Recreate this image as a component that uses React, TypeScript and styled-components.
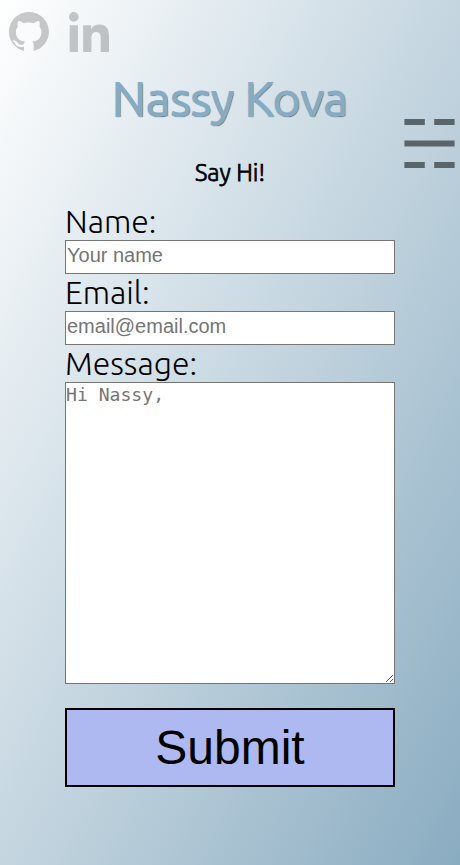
import React from "react";
import styled, { createGlobalStyle } from "styled-components";

const GlobalStyle = createGlobalStyle`
  html, body, #root { height: 100%; }
  body { margin: 0; overflow: hidden; }
  * { box-sizing: border-box; }
`;

const Page = styled.div`
  position: relative;
  height: 865px;
  display: flex;
  flex-direction: column;
  background: linear-gradient(to bottom right, #ffffff, #8aacc1);
  font-family: Ubuntu, "Noto Sans", sans-serif;
  color: #000;
`;

const Social = styled.nav`
  display: flex;
  gap: 20px;
  padding: 12px 0 0 9px;
  height: 52px;
`;

const SocialLink = styled.a`
  display: block;
  width: 40px;
  height: 40px;
  color: #000;
  opacity: 0.2;
  svg { display: block; width: 40px; height: 40px; }
`;

const Title = styled.h1`
  margin: 16px 0 0;
  height: 60px;
  line-height: 60px;
  font-size: 48px;
  font-weight: 300;
  text-align: center;
  white-space: nowrap;
  color: #86abc2;
  -webkit-text-stroke: 1.9px #86abc2;
  text-shadow: 1px 1px 1px #36444f;
`;

const MenuButton = styled.button`
  position: absolute;
  top: 119px;
  left: 404px;
  width: 51px;
  height: 49px;
  padding: 0;
  border: 0;
  background: none;
  color: #5a656b;
  svg { display: block; }
`;

const Subtitle = styled.h2`
  margin: 30px 0 0;
  height: 30px;
  line-height: 30px;
  font-size: 24px;
  font-weight: 300;
  -webkit-text-stroke: 0.75px #000;
  text-align: center;
`;

const Form = styled.form`
  width: 330px;
  margin: 15px auto 0;
  display: flex;
  flex-direction: column;
`;

const Label = styled.label`
  height: 37px;
  line-height: 37px;
  font-size: 32px;
  font-weight: 300;
  white-space: nowrap;
`;

const Input = styled.input`
  height: 34px;
  padding: 0 1px 4px;
  border: 1px solid #767676;
  border-radius: 0;
  font: 20px "Liberation Sans", Arial, sans-serif;
  &::placeholder { color: #757575; }
`;

const Message = styled.textarea`
  display: block;
  height: 302px;
  padding: 1px 0;
  border: 1px solid #767676;
  font: 18.1px "DejaVu Sans Mono", monospace;
  resize: both;
  &::placeholder { color: #757575; }
`;

const Submit = styled.button`
  height: 79px;
  margin-top: 24px;
  padding: 0;
  border: 2px solid #000;
  background: #aeb8f1;
  color: #000;
  font: 48px "Liberation Sans", Arial, sans-serif;
`;

export default function App() {
  return (
    <Page>
      <GlobalStyle />
      <Social>
        <SocialLink aria-label="GitHub">
          <svg viewBox="0 0 16 16" fill="currentColor">
            <path d="M8 0C3.58 0 0 3.58 0 8c0 3.54 2.29 6.53 6 7.59V13.9c-2.4.35-3.1-.4-3.45-1.15-.25-.55-.55-.75-.95-1.05-.25-.2-.2-.4.1-.4.8-.05 1.3.35 1.75 1 .55.8 1.35.95 2.45.65.07-.52.28-.87.51-1.07-1.78-.2-3.64-.89-3.64-3.95 0-.87.31-1.59.82-2.15-.08-.2-.36-1.02.08-2.12 0 0 .67-.21 2.2.82.64-.18 1.32-.27 2-.27s1.36.09 2 .27c1.53-1.04 2.2-.82 2.2-.82.44 1.1.16 1.92.08 2.12.51.56.82 1.27.82 2.15 0 3.07-1.87 3.75-3.65 3.95.35.3.58.8.58 1.5V15.6A8.01 8.01 0 0 0 16 8c0-4.42-3.58-8-8-8z" />
          </svg>
        </SocialLink>
        <SocialLink aria-label="LinkedIn">
          <svg viewBox="0 32 448 448" fill="currentColor">
            <path d="M100.28 480H7.4V180.9h92.88zM53.79 140.1C24.09 140.1 0 115.5 0 85.8a53.79 53.79 0 0 1 107.58 0c0 29.7-24.1 54.3-53.79 54.3zM447.9 480h-92.68V334.4c0-34.7-.7-79.2-48.29-79.2-48.29 0-55.69 37.7-55.69 76.7V480h-92.78V180.9h89.08v40.8h1.3c12.4-23.5 42.69-48.3 87.88-48.3 94 0 111.28 61.9 111.28 142.3V480z" />
          </svg>
        </SocialLink>
      </Social>
      <Title>Nassy Kova</Title>
      <MenuButton aria-label="Menu">
        <svg width="51" height="49" viewBox="0 0 51 49" fill="currentColor">
          <path d="M.4 0h20.4v6H.4zM30.2 0h20.4v6H30.2zM.4 21.5h50.2v6H.4zM.4 43h20.4v6H.4zM30.2 43h20.4v6H30.2z" />
        </svg>
      </MenuButton>
      <Subtitle>Say Hi!</Subtitle>
      <Form>
        <Label htmlFor="name">Name:</Label>
        <Input id="name" placeholder="Your name" />
        <Label htmlFor="email">Email:</Label>
        <Input id="email" placeholder="email@email.com" />
        <Label htmlFor="message">Message:</Label>
        <Message id="message" placeholder="Hi Nassy," />
        <Submit type="button">Submit</Submit>
      </Form>
    </Page>
  );
}
